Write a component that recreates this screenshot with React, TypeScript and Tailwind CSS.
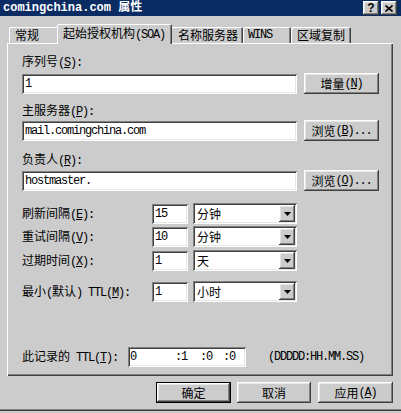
import React from "react";

const LAT = "font-['Liberation_Mono'] tracking-[-1.2px]";
const CJK_RE = /([\u2E80-\u9FFF\u3000-\u303F\uFF00-\uFFEF]+)/;
const CJK_TEST = /[\u2E80-\u9FFF\u3000-\u303F\uFF00-\uFFEF]/;

function Txt({ s }: { s: string }) {
  const out: React.ReactNode[] = [];
  s.split("&").forEach((seg, si) => {
    let rest = seg;
    if (si > 0 && seg.length) {
      out.push(
        <u key={`u${si}`} className={LAT}>
          {seg[0]}
        </u>
      );
      rest = seg.slice(1);
    }
    rest
      .split(CJK_RE)
      .filter(Boolean)
      .forEach((p, i) => {
        const cjk = CJK_TEST.test(p);
        out.push(
          <span key={`${si}-${i}`} className={cjk ? "" : LAT}>
            {p}
          </span>
        );
      });
  });
  return <>{out}</>;
}

const RAISED =
  "shadow-[inset_-1px_-1px_0_#404040,inset_1px_1px_0_#ffffff,inset_-2px_-2px_0_#808080,inset_2px_2px_0_#e6e6e6]";
const SUNKEN =
  "shadow-[inset_1px_1px_0_#808080,inset_-1px_-1px_0_#ffffff,inset_2px_2px_0_#404040,inset_-2px_-2px_0_#e6e6e6]";

function Button({ label, w, def }: { label: string; w: string; def?: boolean }) {
  if (def) {
    return (
      <div className={`${w} h-[21px] border border-black bg-[#cccccc]`}>
        <div className={`w-full h-full flex items-center justify-center ${RAISED}`}>
          <Txt s={label} />
        </div>
      </div>
    );
  }
  return (
    <div className={`${w} h-[21px] bg-[#cccccc] flex items-center justify-center ${RAISED}`}>
      <Txt s={label} />
    </div>
  );
}

function Input({ w, value, h = "h-[20px]" }: { w: string; value: string; h?: string }) {
  return (
    <div className={`${w} ${h} bg-white flex items-center pl-[3px] ${SUNKEN}`}>
      <span className={LAT}>{value}</span>
    </div>
  );
}

function Select({ value }: { value: string }) {
  return (
    <div className={`w-[104px] h-[21px] bg-white flex items-center pl-[4px] pr-[2px] ${SUNKEN}`}>
      <span className="flex-1">{value}</span>
      <div className={`w-[16px] h-[17px] bg-[#cccccc] flex items-center justify-center ${RAISED}`}>
        <svg width="7" height="4" viewBox="0 0 7 4">
          <polygon points="0,0 7,0 3.5,4" fill="#000" />
        </svg>
      </div>
    </div>
  );
}

function Tab({ label, w, pl = "pl-[6px]" }: { label: string; w: string; pl?: string }) {
  return (
    <div
      className={`${w} h-[16px] ${pl} flex items-center rounded-t-[2px] bg-[#cccccc] shadow-[inset_1px_1px_0_#ffffff,inset_-1px_0_0_#404040,inset_-2px_0_0_#808080]`}
    >
      <Txt s={label} />
    </div>
  );
}

function RowField({ label, num, unit }: { label: string; num: string; unit: string }) {
  return (
    <div className="flex items-center h-[21px]">
      <div className="w-[130px]">
        <Txt s={label} />
      </div>
      <Input w="w-[36px]" value={num} />
      <div className="w-[5px]" />
      <Select value={unit} />
    </div>
  );
}

export default function App() {
  return (
    <div className="w-[401px] h-[413px] bg-[#cccccc] flex flex-col overflow-hidden text-[12px] leading-[14px] text-black font-['Noto_Sans_CJK_SC',sans-serif]">
      {/* Title bar */}
      <div className="h-[16px] bg-[#0b2b63] flex items-center pl-[3px] pr-[4px] text-white">
        <span className="font-['Liberation_Mono','Noto_Sans_CJK_SC',monospace] font-bold">
          comingchina.com 属性
        </span>
        <div className="flex-1" />
        <div className={`w-[16px] h-[14px] bg-[#cccccc] flex items-center justify-center text-black font-bold font-['Liberation_Sans'] text-[12px] leading-none ${RAISED}`}>
          ?
        </div>
        <div className="w-[2px]" />
        <div className={`w-[16px] h-[14px] bg-[#cccccc] flex items-center justify-center ${RAISED}`}>
          <svg width="8" height="7" viewBox="0 0 8 7">
            <path d="M0.5 0.5 L7.5 6.5 M7.5 0.5 L0.5 6.5" stroke="#000" strokeWidth="1.6" />
          </svg>
        </div>
      </div>

      {/* Tabs */}
      <div className="h-[27px] flex items-end pl-[9px]">
        <Tab label="常规" w="w-[50px]" />
        <div className="relative z-10 top-[1px] -mx-[2px] w-[115px] h-[20px] pl-[6px] pt-[2px] rounded-t-[2px] bg-[#cccccc] shadow-[inset_1px_1px_0_#ffffff,inset_-1px_0_0_#404040,inset_-2px_0_0_#808080]">
          <Txt s="起始授权机构(SOA)" />
        </div>
        <Tab label="名称服务器" w="w-[73px]" pl="pl-[8px]" />
        <Tab label="WINS" w="w-[48px]" pl="pl-[5px]" />
        <Tab label="区域复制" w="w-[60px]" />
      </div>

      {/* Panel */}
      <div className="ml-[7px] w-[386px] h-[333px] pl-[15px] flex flex-col shadow-[inset_1px_1px_0_#ffffff,inset_-1px_-1px_0_#404040,inset_-2px_-2px_0_#808080]">
        <div className="mt-[11px]">
          <Txt s="序列号(&S):" />
        </div>
        <div className="mt-[3px] flex items-center h-[21px]">
          <Input w="w-[275px]" value="1" />
          <div className="w-[7px]" />
          <Button label="增量(&N)" w="w-[75px]" />
        </div>

        <div className="mt-[9px]">
          <Txt s="主服务器(&P):" />
        </div>
        <div className="mt-[1px] flex items-center h-[21px]">
          <Input w="w-[275px]" value="mail.comingchina.com" />
          <div className="w-[7px]" />
          <Button label="浏览(&B)..." w="w-[75px]" />
        </div>

        <div className="mt-[11px]">
          <Txt s="负责人(&R):" />
        </div>
        <div className="mt-[2px] flex items-center h-[21px]">
          <Input w="w-[275px]" value="hostmaster." />
          <div className="w-[7px]" />
          <Button label="浏览(&O)..." w="w-[75px]" />
        </div>

        <div className="mt-[12px]">
          <RowField label="刷新间隔(&E):" num="15" unit="分钟" />
        </div>
        <div className="mt-[2px]">
          <RowField label="重试间隔(&V):" num="10" unit="分钟" />
        </div>
        <div className="mt-[3px]">
          <RowField label="过期时间(&X):" num="1" unit="天" />
        </div>
        <div className="mt-[10px]">
          <RowField label="最小(默认) TTL(&M):" num="1" unit="小时" />
        </div>

        <div className="mt-[45px] flex items-center h-[20px]">
          <div className="w-[106px]">
            <Txt s="此记录的 TTL(&T):" />
          </div>
          <div className={`w-[118px] h-[20px] bg-white flex items-center pl-[2px] ${SUNKEN}`}>
            <span className={`${LAT} w-[45px]`}>0</span>
            <span className={`${LAT} w-[25px]`}>:1</span>
            <span className={`${LAT} w-[23px]`}>:0</span>
            <span className={LAT}>:0</span>
          </div>
          <div className="w-[22px]" />
          <span className={LAT}>(DDDDD:HH.MM.SS)</span>
        </div>
      </div>

      {/* Bottom buttons */}
      <div className="mt-[6px] flex justify-end pr-[8px]">
        <Button label="确定" w="w-[75px]" def />
        <div className="w-[6px]" />
        <Button label="取消" w="w-[74px]" />
        <div className="w-[7px]" />
        <Button label="应用(&A)" w="w-[75px]" />
      </div>
      <div className="flex-1" />
      <div className="h-[1px] bg-[#808080]" />
      <div className="h-[1px] bg-[#404040]" />
      <div className="h-[2px] bg-[#cccccc]" />
    </div>
  );
}
